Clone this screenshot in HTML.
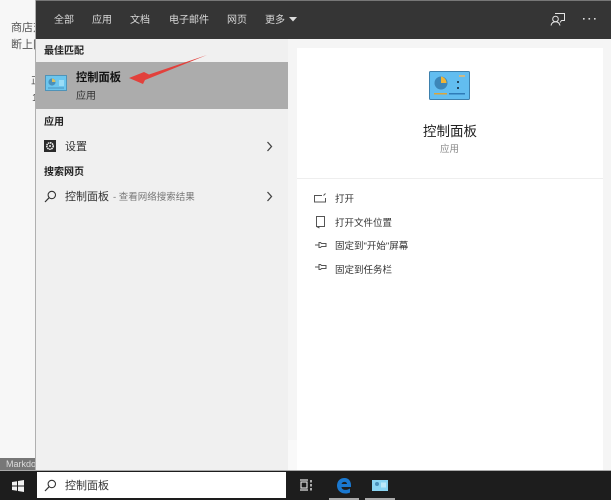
<!DOCTYPE html>
<html><head><meta charset="utf-8"><style>
html,body{margin:0;padding:0;width:611px;height:500px;overflow:hidden;background:#f7f7f7}
#w{position:absolute;left:0;top:0;width:611px;height:500px;overflow:hidden;background:#f7f7f7;filter:blur(.35px);font-family:"Liberation Sans","Noto Sans CJK SC",sans-serif;color:#222}
.a{position:absolute;white-space:nowrap;line-height:1}
.n{top:15px;font-size:10px;color:#d8d8d8;height:12px;line-height:12px}
.h{font-size:10px;font-weight:700;color:#222;left:44px}
.m{font-size:9.5px;color:#333;left:335px}
svg{position:absolute;overflow:visible}
</style></head><body><div id="w">
<div class="a" style="left:11px;top:23px;font-size:11px;color:#555">商店对</div>
<div class="a" style="left:11px;top:40px;font-size:11px;color:#555">断上网</div>
<div class="a" style="left:31px;top:77px;font-size:10px;color:#555">正</div>
<div class="a" style="left:32px;top:94px;font-size:10px;color:#555">1</div>
<div class="a" style="left:0;top:458px;width:35px;height:13px;background:#777;color:#ddd;font-size:9px;line-height:13px;padding-left:6px;box-sizing:border-box;overflow:hidden">Markdown</div>

<div class="a" style="left:35px;top:0;width:253px;height:471px;background:#f0f0f0"></div>
<div class="a" style="left:288px;top:38px;width:323px;height:433px;background:#f5f5f5"></div>
<div class="a" style="left:288px;top:440px;width:9px;height:31px;background:#f9f9f9"></div>
<div class="a" style="left:297px;top:48px;width:306px;height:423px;background:#fff"></div>
<div class="a" style="left:35px;top:0;width:576px;height:39px;background:#353535;border-top:1px solid #777;box-sizing:border-box"></div>
<div class="a" style="left:35px;top:0;width:1px;height:471px;background:#b0b0b0"></div>

<div class="a n" style="left:54px">全部</div>
<div class="a n" style="left:92px">应用</div>
<div class="a n" style="left:130px">文档</div>
<div class="a n" style="left:169px">电子邮件</div>
<div class="a n" style="left:227px">网页</div>
<div class="a n" style="left:265px">更多</div>
<svg style="left:0;top:0" width="611" height="40">
<path d="M289 17h8l-4 4.500z" fill="#ddd"/>
<g fill="none" stroke="#e4e4e4" stroke-width="1"><path d="M555 13.500h9.500v7h-3l-1.500 2"/><circle cx="555.500" cy="19" r="2.800"/><path d="M551 25.500c.6-2.800 2.300-3.700 4.500-3.700s3.900 1 4.500 3.700"/></g>
<g fill="#ddd"><rect x="583" y="18" width="1.600" height="1.600"/><rect x="588.500" y="18" width="1.600" height="1.600"/><rect x="594" y="18" width="1.600" height="1.600"/></g>
</svg>

<div class="a h" style="top:47px">最佳匹配</div>
<div class="a" style="left:36px;top:62px;width:252px;height:47px;background:#acacac"></div>
<svg style="left:45px;top:75px" width="23" height="17"><rect x=".5" y=".5" width="21" height="15" fill="#6cc6ee" stroke="#4f93b8"/><circle cx="7" cy="7" r="3.600" fill="#4a90ba"/><path d="M7 3.500a3.500 3.500 0 0 1 3.500 3.500H7z" fill="#d8c060"/><rect x="14" y="5" width="5" height="6" fill="#9adcf6"/><rect x="3" y="12.500" width="16" height="1" fill="#4d93bd"/></svg>
<div class="a" style="left:76px;top:73px;font-size:11.250px;font-weight:700;color:#111">控制面板</div>
<div class="a" style="left:76px;top:92px;font-size:10px;color:#333">应用</div>
<svg style="left:0;top:0" width="300" height="120"><path d="M207 55 L149 74.500 L144 72 L129 78 L143 84 L145 80 Z" fill="#e2413c"/></svg>

<div class="a h" style="top:118px">应用</div>
<svg style="left:44px;top:140px" width="12" height="12"><rect width="12" height="12" fill="#2b2b2b"/><circle cx="6" cy="6" r="3.200" fill="none" stroke="#eee" stroke-width="1.600" stroke-dasharray="1.500 .6"/><circle cx="6" cy="6" r="1" fill="#eee"/></svg>
<div class="a" style="left:65px;top:142px;font-size:11px;color:#333">设置</div>
<svg style="left:266px;top:141px" width="8" height="11"><path d="M1.500 1l4 4.500-4 4.500" fill="none" stroke="#444" stroke-width="1.300"/></svg>
<div class="a h" style="top:168px">搜索网页</div>
<svg style="left:44px;top:190px" width="13" height="13"><circle cx="7.800" cy="5" r="3.700" fill="none" stroke="#333" stroke-width="1.100"/><path d="M5 7.800L1 12" stroke="#333" stroke-width="1.200"/></svg>
<div class="a" style="left:65px;top:192px;font-size:11px;color:#333">控制面板</div>
<div class="a" style="left:113px;top:193px;font-size:9.500px;color:#777">- 查看网络搜索结果</div>
<svg style="left:266px;top:191px" width="8" height="11"><path d="M1.500 1l4 4.500-4 4.500" fill="none" stroke="#444" stroke-width="1.300"/></svg>

<svg style="left:429px;top:71px" width="42" height="30"><rect x=".5" y=".5" width="40" height="28" rx="1" fill="#62bdf0" stroke="#3d80ad"/><circle cx="12" cy="12" r="6.500" fill="#3c86b8"/><path d="M12 5.500a6.500 6.500 0 0 1 5.500 6.500H12z" fill="#efb436"/><rect x="28" y="10" width="2" height="2" fill="#23465f"/><rect x="28" y="16" width="2" height="2" fill="#23465f"/><rect x="5" y="22" width="13" height="1.500" fill="#d9a53c"/><rect x="20" y="22" width="16" height="1.500" fill="#2f7cb8"/><rect x="30" y="4" width="6" height="2" fill="#c9b98a"/></svg>
<div class="a" style="left:423px;top:125px;font-size:13.500px;color:#222">控制面板</div>
<div class="a" style="left:440px;top:145px;font-size:9.500px;color:#888">应用</div>
<div class="a" style="left:297px;top:178px;width:306px;height:1px;background:#eee"></div>

<svg style="left:300px;top:185px" width="40" height="95" fill="none" stroke="#555" stroke-width="1">
<path d="M22 10.500h-7.500v6.500h11v-4M23.500 10.500l2-2"/>
<path d="M16.500 31.500h8v10h-8zM16.500 31.500v10l3 1.500"/>
<path d="M15 60h4M19 57.500v5h1.500l1-1h4.500v-3h-4.500l-1-1zM15 82h4M19 79.500v5h1.500l1-1h4.500v-3h-4.500l-1-1z"/>
</svg>
<div class="a m" style="top:195px">打开</div>
<div class="a m" style="top:219px">打开文件位置</div>
<div class="a m" style="top:242px">固定到"开始"屏幕</div>
<div class="a m" style="top:266px">固定到任务栏</div>

<div class="a" style="left:0;top:470px;width:611px;height:1px;background:#aaa"></div>
<div class="a" style="left:0;top:471px;width:611px;height:29px;background:#1d1d1d"></div>
<svg style="left:12px;top:480px" width="12" height="12" fill="#f2f2f2"><path d="M0 2l5-.8V5.500H0zM6 1l6-1v5.500H6zM0 6.500h5v4.300L0 10zM6 6.500h6V12l-6-1z"/></svg>
<div class="a" style="left:37px;top:472px;width:249px;height:26px;background:#fff"></div>
<svg style="left:44px;top:479px" width="13" height="13"><circle cx="7.800" cy="5" r="3.700" fill="none" stroke="#333" stroke-width="1.100"/><path d="M5 7.800L1 12" stroke="#333" stroke-width="1.200"/></svg>
<div class="a" style="left:65px;top:481px;font-size:11px;color:#333">控制面板</div>
<svg style="left:300px;top:479px" width="13" height="13" fill="none" stroke="#ddd" stroke-width="1.200"><rect x="1" y="3" width="6" height="6"/><path d="M0 1h8M0 11h8"/><path d="M11 1v2.500M11 5v2.500M11 9v2.500" stroke-width="1.500"/></svg>
<svg style="left:336px;top:477px" width="16" height="18"><path d="M1 9C1 4 4 1 8.500 1 13 1 15.500 4.500 15 10H5.500c.2 3 4.500 4 8.500 1.500v4C9 18 1.500 16 1 9zM5.500 7h5.500C11 4.500 6.500 4 5.500 7z" fill="#1a78d0"/></svg>
<svg style="left:372px;top:480px" width="17" height="12"><rect width="16" height="11" fill="#8ad4f2"/><circle cx="5" cy="4" r="2" fill="#4a90ba"/><rect x="9" y="2.500" width="5" height="5" fill="#bde8f8"/></svg>
<div class="a" style="left:329px;top:498px;width:30px;height:2px;background:#aaa"></div>
<div class="a" style="left:365px;top:498px;width:30px;height:2px;background:#aaa"></div>
</div></body></html>
